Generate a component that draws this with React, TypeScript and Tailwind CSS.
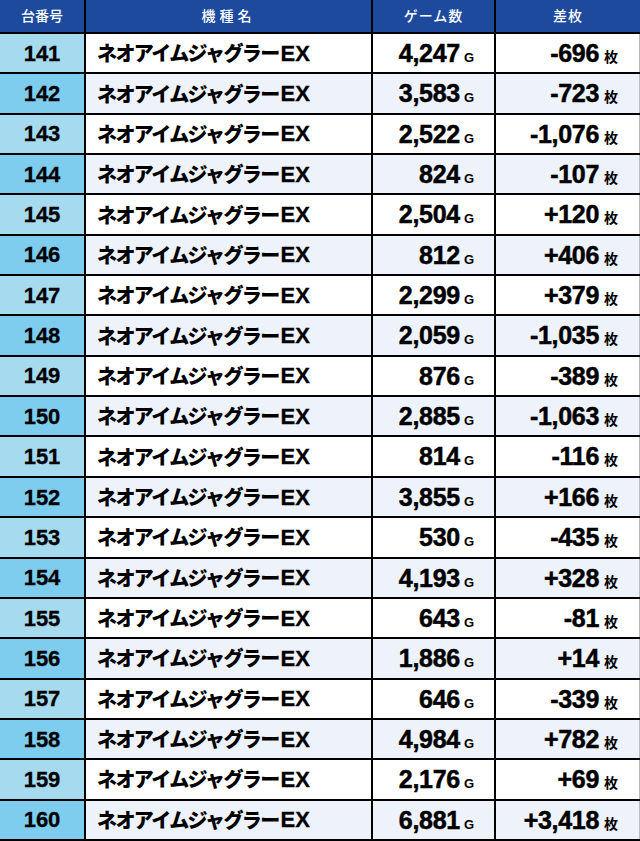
import React from "react";

const rows: [number, string, string][] = [
  [141, "4,247", "-696"],
  [142, "3,583", "-723"],
  [143, "2,522", "-1,076"],
  [144, "824", "-107"],
  [145, "2,504", "+120"],
  [146, "812", "+406"],
  [147, "2,299", "+379"],
  [148, "2,059", "-1,035"],
  [149, "876", "-389"],
  [150, "2,885", "-1,063"],
  [151, "814", "-116"],
  [152, "3,855", "+166"],
  [153, "530", "-435"],
  [154, "4,193", "+328"],
  [155, "643", "-81"],
  [156, "1,886", "+14"],
  [157, "646", "-339"],
  [158, "4,984", "+782"],
  [159, "2,176", "+69"],
  [160, "6,881", "+3,418"],
];

export default function App() {
  return (
    <div className="w-[640px] h-[841px] bg-black pb-[2px] grid grid-cols-[84px_285px_121px_1fr] grid-rows-[32px_repeat(20,1fr)] gap-x-[2px] gap-y-[2px] overflow-hidden font-['Liberation_Sans','Noto_Sans_CJK_JP',sans-serif]">
      <div className="bg-[#1e4a9e] text-white text-[14px] font-medium flex items-center justify-center">台番号</div>
      <div className="bg-[#1e4a9e] text-white text-[14px] font-medium flex items-center justify-center tracking-[4px]">機種名</div>
      <div className="bg-[#1e4a9e] text-white text-[14px] font-medium flex items-center justify-center tracking-[1px]">ゲーム数</div>
      <div className="bg-[#1e4a9e] text-white text-[14px] font-medium flex items-center justify-center tracking-[1px]">差枚</div>
      {rows.map(([id, g, d], i) => {
        const even = i % 2 === 1;
        const bg = even ? "bg-[#edf2fb]" : "bg-white";
        return (
          <React.Fragment key={id}>
            <div className={`${even ? "bg-[#7ecdef]" : "bg-[#a6daee]"} flex items-center justify-center font-bold text-[22px] text-black [-webkit-text-stroke:0.3px_black]`}>
              {id}
            </div>
            <div className={`${bg} flex items-center pl-[11px] text-black whitespace-nowrap`}>
              <span className="text-[20px] font-black tracking-[-1.6px] font-['Noto_Sans_CJK_JP',sans-serif]">ネオアイムジャグラー</span>
              <span className="text-[22px] font-bold ml-[2px] [-webkit-text-stroke:0.3px_black]">EX</span>
            </div>
            <div className={`${bg} flex items-baseline justify-end pr-[20px] pt-[4px] text-black`}>
              <span className="font-bold text-[25px] leading-[30px] tracking-[-0.3px] [-webkit-text-stroke:0.5px_black]">{g}</span>
              <span className="font-bold text-[13px] ml-[4px]">G</span>
            </div>
            <div className={`${bg} flex items-baseline justify-end pr-[21px] pt-[4px] text-black border-r border-[#bbbbbb]`}>
              <span className="font-bold text-[25px] leading-[30px] tracking-[-0.3px] [-webkit-text-stroke:0.5px_black]">{d}</span>
              <span className="font-bold text-[14px] ml-[5px] font-['Noto_Sans_CJK_JP',sans-serif]">枚</span>
            </div>
          </React.Fragment>
        );
      })}
    </div>
  );
}
